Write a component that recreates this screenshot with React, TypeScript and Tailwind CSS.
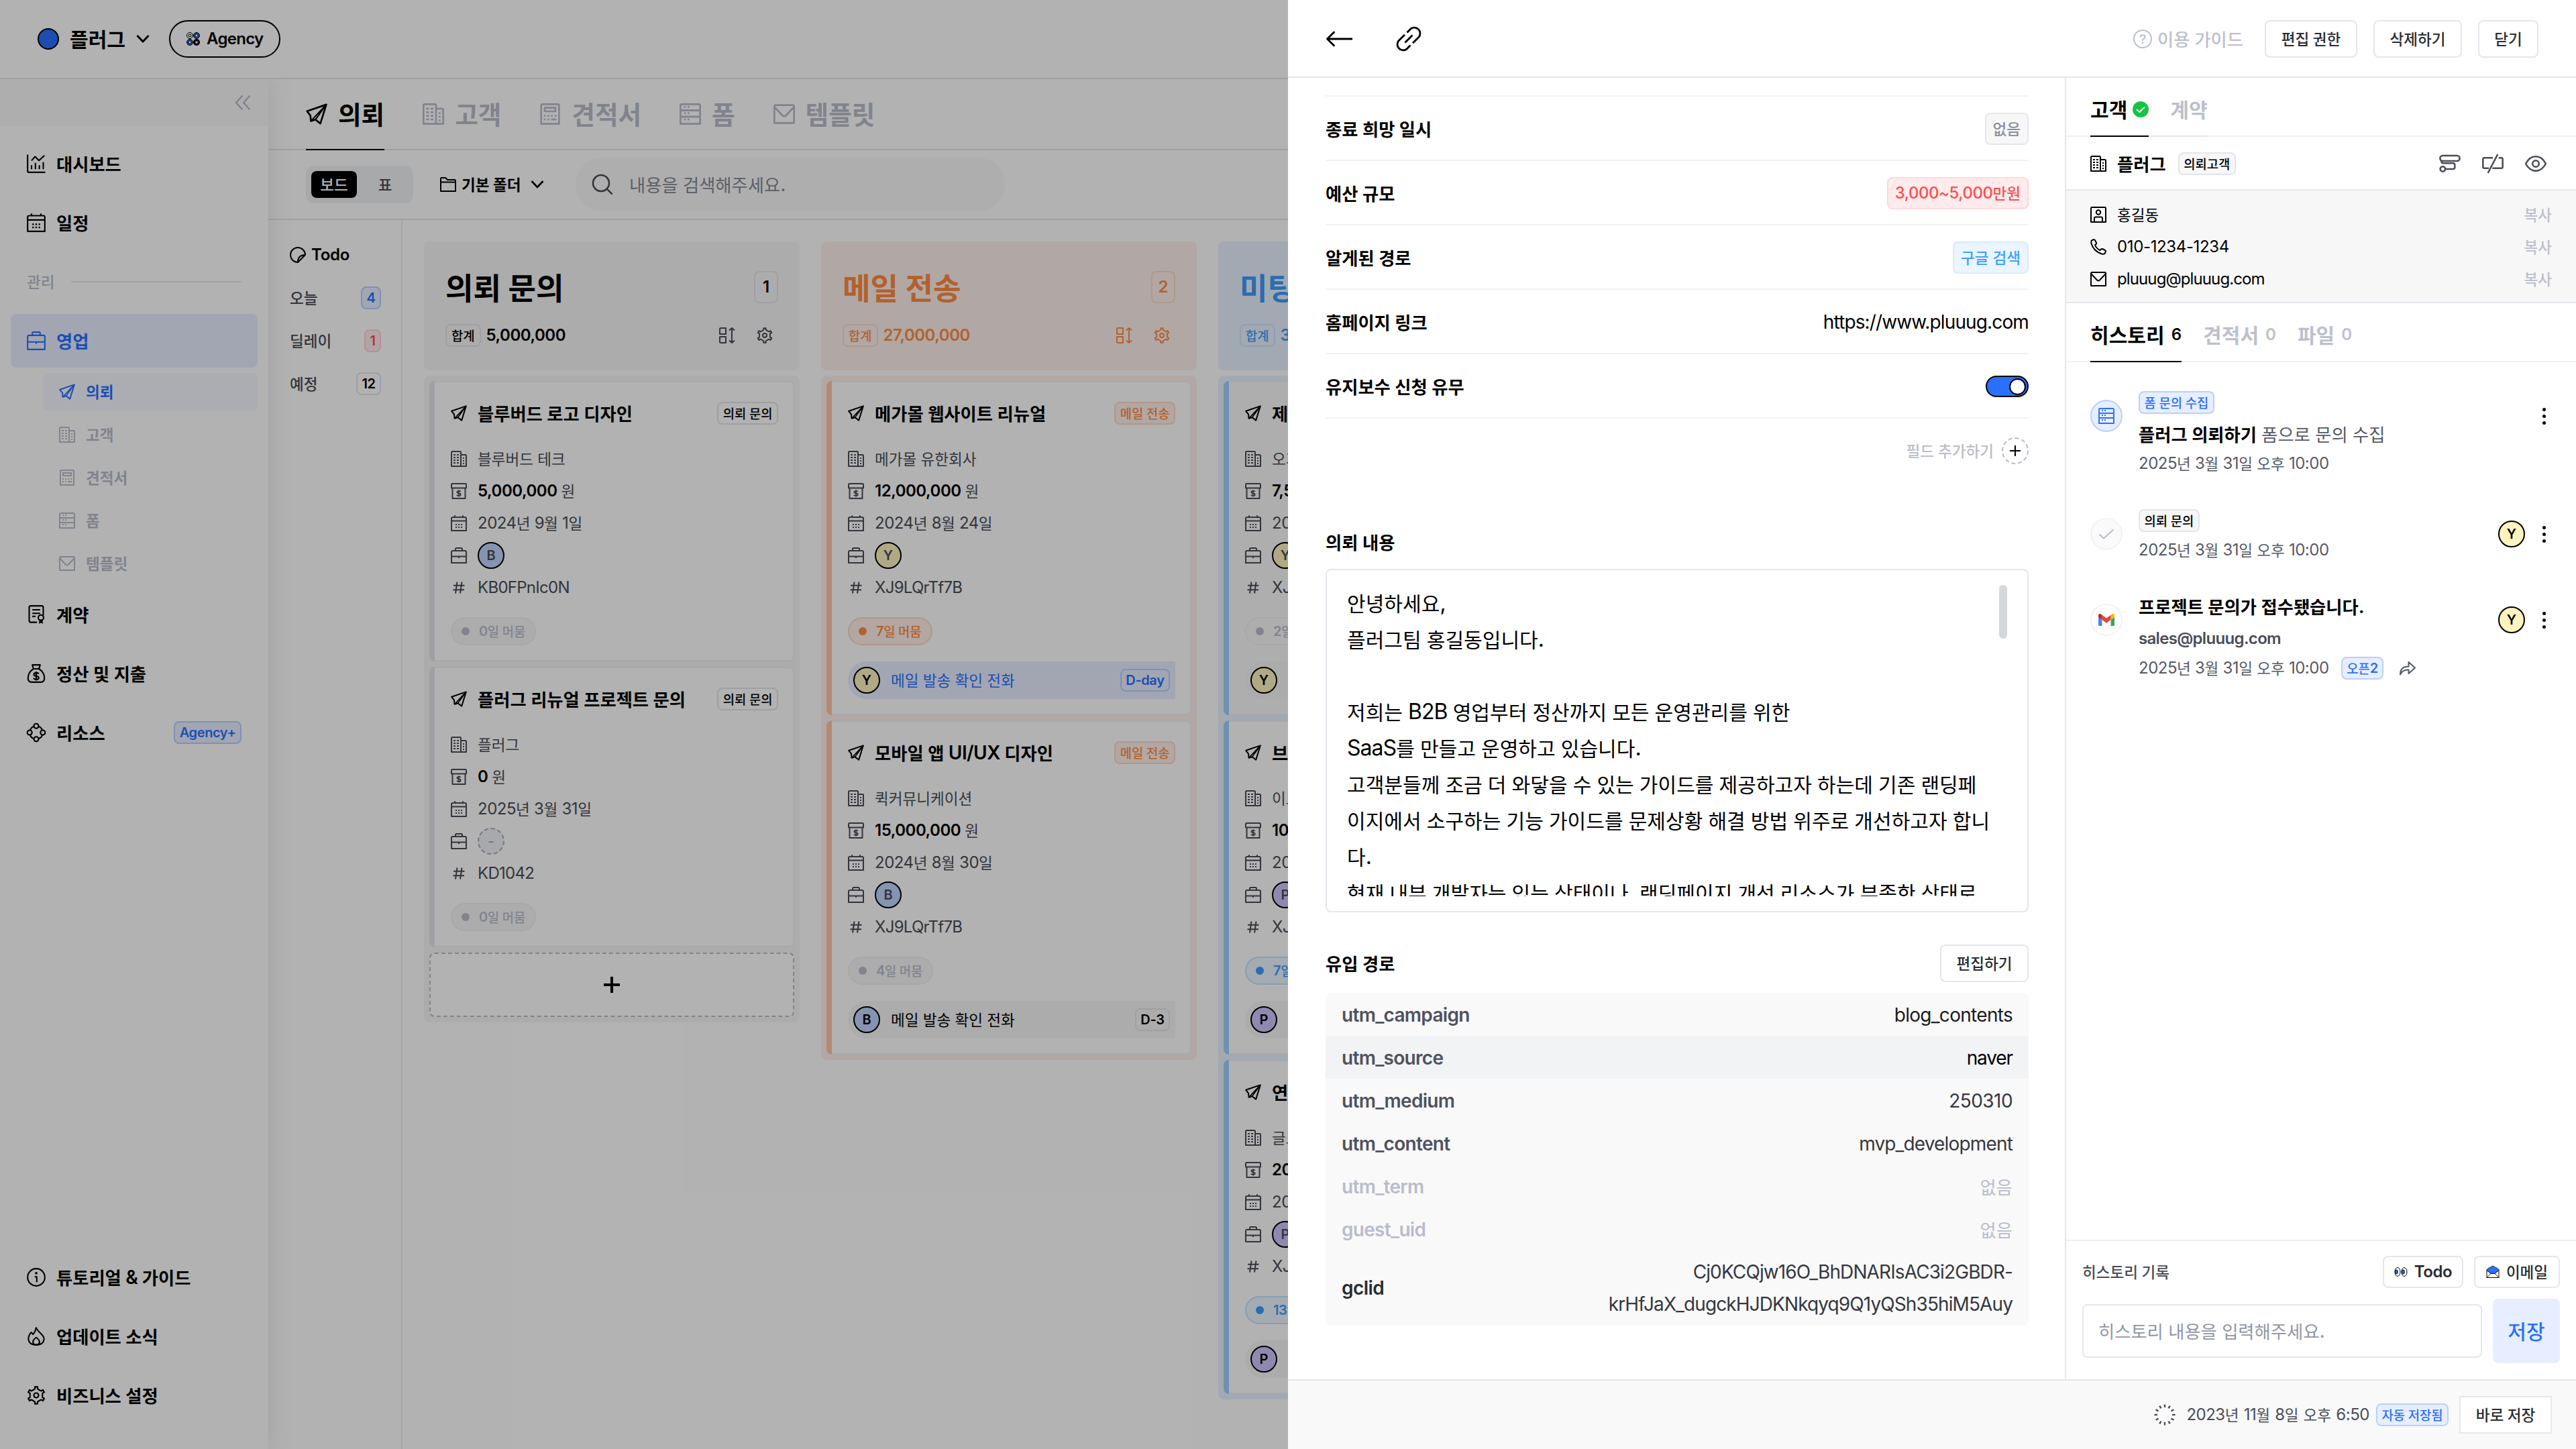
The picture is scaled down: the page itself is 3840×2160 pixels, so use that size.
import React from "react";

/* Hangul runs are set a little smaller than the Latin runs beside them. */
function T({ t, c = "", h = "" }: { t: string; c?: string; h?: string }) {
  return (
    <span className={`tracking-[-0.02em] whitespace-pre ${c}`}>
      {t.split(/([가-힣]+)/).map((p, i) =>
        i % 2 ? (
          <span key={i} className={`align-[-0.035em] text-[0.94em] leading-none tracking-normal ${h}`}>
            {p}
          </span>
        ) : (
          p
        )
      )}
    </span>
  );
}

function gearPath() {
  const pts: string[] = [];
  for (let i = 0; i < 6; i++) {
    const a = (i * Math.PI) / 3 - Math.PI / 2;
    [
      [-0.36, 8],
      [-0.19, 8.6],
      [-0.16, 11],
      [0.16, 11],
      [0.19, 8.6],
      [0.36, 8],
    ].forEach(([d, r]) => pts.push(`${(12 + r * Math.cos(a + d)).toFixed(2)} ${(12 + r * Math.sin(a + d)).toFixed(2)}`));
  }
  return "M" + pts.join("L") + "Z";
}
const GEAR = gearPath();

const dots = (xs: number[], ys: number[], w = 2) =>
  ys.flatMap((y) => xs.map((x) => <rect key={`${x}-${y}`} x={x} y={y} width={w} height={2} fill="currentColor" stroke="none" />));

const ICONS: Record<string, React.ReactNode> = {
  send: (
    <>
      <path d="M1.2 8.8 22.8 1.4 16.2 22.6 10.6 18.2 5.6 19.8 5 13.6Z" />
      <path d="M22.8 1.4 5.8 19.6M22.8 1.4 10.6 18.2" strokeWidth="1.6" />
    </>
  ),
  building: (
    <>
      <path d="M15 23V2.5Q15 1 13.5 1H2.5Q1 1 1 2.5V23H23V7.5Q23 6 21.5 6H15" />
      {dots([4, 9], [5, 9, 13, 17], 3)}
      {dots([18], [10, 14, 18])}
    </>
  ),
  calc: (
    <>
      <path d="M2 23V2.5Q2 1 3.5 1H20.5Q22 1 22 2.5V23Z" />
      <rect x="6" y="5" width="12" height="4" />
      {dots([5, 9, 13, 17], [13])}
      {dots([5, 9], [17])}
      {dots([13], [17], 6)}
    </>
  ),
  form: (
    <>
      <rect x="1" y="1" width="22" height="7" rx="1.5" />
      <rect x="1" y="8" width="22" height="7" rx="1.5" />
      <path d="M1 16.500Q1 15 2.5 15H21.500Q23 15 23 16.500V23H1Z" />
      {dots([5, 9], [3, 10, 17])}
    </>
  ),
  mail: (
    <>
      <path d="M1 22V3.500Q1 2 2.5 2H21.500Q23 2 23 3.500V22Z" />
      <path d="M1.500 4.500 10 13.500Q12 15.500 14 13.500L22.500 4.500" />
    </>
  ),
  chart: (
    <>
      <path d="M1 .5V21.500Q1 23 2.500 23H23.500M6 14V19M11 11V19M16 14V19M21 10V19M6 8 10.500 3 15.500 8 22.500 1.500" />
    </>
  ),
  calendar: (
    <>
      <path d="M1 23V5Q1 3 3 3H21Q23 3 23 5V23ZM1 8.500H23M6 .3V3M18 .3V3" />
      {dots([7, 11, 15], [13, 17])}
    </>
  ),
  briefcase: (
    <>
      <path d="M1 23V7Q1 5 3 5H21Q23 5 23 7V23ZM7 5V2.500Q7 1 8.500 1H15.500Q17 1 17 2.500V5M1 13.500H23M12 13.500V16" />
    </>
  ),
  contract: (
    <>
      <path d="M13 22H5Q3 22 3 20V3Q3 1 5 1H19Q21 1 21 3V13M7 6H17M7 10.500H17M7 14.500H11" />
      <circle cx="18" cy="16" r="3.4" />
      <path d="M15.700 18.500V24L18 22.500 20.300 24V18.500Z" fill="currentColor" stroke="none" />
    </>
  ),
  money: (
    <>
      <path d="M8.500 6C3 9.500 1.500 14 1.500 18Q1.500 23 6.500 23H17.500Q22.500 23 22.500 18C22.500 14 21 9.500 15.500 6ZM8.500 6 7 1H17L15.500 6" />
      <path d="M15.300 12.500Q14.500 11 12 11 9 11 9 13.200 9 15 12 15.200 15.200 15.500 15.200 17.500 15.200 19.600 12 19.600 9.300 19.600 8.700 17.800M12 9.500V21" />
    </>
  ),
  nodes: (
    <>
      <circle cx="12" cy="3.600" r="3" />
      <circle cx="12" cy="20.400" r="3" />
      <circle cx="3.600" cy="12" r="3" />
      <circle cx="20.400" cy="12" r="3" />
      <path d="M9 4.200Q5 5.500 4.300 9M15 4.200Q19 5.500 19.700 9M9 19.800Q5 18.500 4.300 15M15 19.800Q19 18.500 19.700 15" />
    </>
  ),
  info: (
    <>
      <circle cx="12" cy="12" r="11" />
      <path d="M10 11.300H12.700V18.500" />
      <circle cx="12" cy="6.700" r="1.600" fill="currentColor" stroke="none" />
    </>
  ),
  flame: (
    <>
      <path d="M12 1Q12.500 3.500 18 8.500 22 12 22 16 21 23 12 23 3 23 2 16 2 11 5.500 7L8 9.500Q11 6 12 1Z" />
      <path d="M12 13.500Q17 17 16 20.500 15 23 12 23 9 23 8 20.500 7 17 12 13.500Z" />
    </>
  ),
  gear: (
    <>
      <path d={GEAR} />
      <circle cx="12" cy="12" r="3" />
    </>
  ),
  price: (
    <>
      <path d="M1 7V2.500Q1 1 2.500 1H21.500Q23 1 23 2.500V7.500H1ZM2.500 7.500V23H21.500V7.500" />
      <path d="M14.800 12.800Q14 11.800 12 11.800 9.300 11.800 9.300 13.600 9.300 15.200 12 15.300 14.800 15.500 14.800 17.200 14.800 19 12 19 9.700 19 9 17.800M12 10.500V20.500" strokeWidth="1.700" />
    </>
  ),
  hash: <path d="M9.500 3.500 7 20.500M16.500 3.500 14 20.500M4 8.800H20.500M3.500 15.200H20" />,
  sort: (
    <>
      <path d="M1 10V2.500Q1 1 2.500 1H10V10ZM1 14H10V23H2.500Q1 23 1 21.500ZM19 1.500V22.500M15 4.500 19 1 23 4.500M15 19.500 19 23 23 19.500" />
    </>
  ),
  sticky: (
    <>
      <path d="M23 12A11 11 0 1 0 12 23L23 12Q12 12 12 23" />
    </>
  ),
  search: (
    <>
      <circle cx="10.500" cy="10.500" r="9" />
      <path d="M17 17 23 23" />
    </>
  ),
  folder: <path d="M1 22V3.500Q1 2 2.500 2H8L11 5H21.500Q23 5 23 6.500V22ZM1 8.500H23" />,
  chevrons: <path d="M11.500 1.500 2 12 11.500 22.500M22.500 1.500 13 12 22.500 22.500" />,
  chevron: <path d="M3.500 7 12 16 20.500 7" />,
  plus: <path d="M12 0V24M0 12H24" />,
  arrow: <path d="M1 12H24M8 5.500 1.500 12 8 18.500" />,
  person: (
    <>
      <path d="M1 23V2.500Q1 1 2.500 1H21.500Q23 1 23 2.500V23ZM6 23V17.500Q6 15.500 8 15.500H16Q18 15.500 18 17.500V23" />
      <circle cx="12" cy="8.500" r="3.200" />
    </>
  ),
  phone: (
    <path d="M2 2.500 5 1Q6.300 .8 7 2L9 6Q9.300 7.200 8.500 8L7 9.500Q9 14.500 14.500 17L16 15.500Q16.800 14.700 18 15L22 17Q23.200 17.700 23 19L21.500 22Q20.500 23.200 17 22.500 4 18 1.300 6 1 3.500 2 2.500Z" />
  ),
  link: <path d="M10.500 6.250 13.900 2.850A5.250 5.250 0 0 1 21.200 10.200L15.600 15.800M13.500 17.750 10.100 21.150A5.250 5.250 0 0 1 2.800 13.800L8.400 8.200M8.700 15.300 15.300 8.700" />,
  roller: (
    <>
      <rect x="1" y="3" width="22" height="6" rx="3" />
      <path d="M2.500 8.800Q2.500 11.500 4.500 11.500H15.500Q17.500 11.500 17.500 13.500V16Q17.500 18 15.500 18H7" />
      <circle cx="4" cy="18" r="2.800" />
    </>
  ),
  slash: <path d="M12 5.500H2.500Q1 5.500 1 7V15.500Q1 17 2.500 17H7.500M18.500 5.500H21.500Q23 5.500 23 7V15.500Q23 17 21.500 17H11.500M17.500 1.500 6.500 22.500" />,
  eye: (
    <>
      <path d="M.8 12Q5 4 12 4 19 4 23.200 12 19 20 12 20 5 20 .8 12Z" />
      <circle cx="12" cy="12" r="3.600" />
    </>
  ),
  share: <path d="M1 21.500Q1 9.500 13.500 9.500V3L23 11.500 13.500 20V14.500Q4.500 14 1 21.500Z" />,
  check: <path d="M1.500 12.500 8 18.500 22.500 5.500" />,
};

function Ic({ n, c = "size-6", sw = 2 }: { n: string; c?: string; sw?: number }) {
  return (
    <svg viewBox="0 0 24 24" className={`shrink-0 overflow-visible ${c}`} fill="none" stroke="currentColor" strokeWidth={sw} strokeLinejoin="round">
      {ICONS[n]}
    </svg>
  );
}

const BADGE = {
  gray: "border-[#e4e5eb] bg-[#f7f7f8] text-black",
  plain: "border-[#e4e5eb] bg-transparent text-black",
  blue: "border-[#b9d0ff] bg-[#e7eeff] text-[#2970ff]",
  red: "border-[#ffd3d5] bg-[#ffebec] text-[#ff4d4f]",
  orange: "border-[#ffd9c5] bg-[#fff0e9] text-[#ff8c42]",
} as const;

function Badge({ t, k = "gray" }: { t: string; k?: keyof typeof BADGE }) {
  return (
    <span className={`inline-flex h-[34px] shrink-0 items-center rounded-lg border-2 px-[6.500px] text-[20px] leading-[30px] font-semibold ${BADGE[k]}`}>
      <T t={t} h="font-medium" />
    </span>
  );
}

const AV: Record<string, string> = { B: "bg-[#c0d5ff]", Y: "bg-[#fdf3bf]", P: "bg-[#cdc4ff]" };

function Avatar({ l }: { l: string }) {
  if (l === "-")
    return (
      <span className="flex size-10 shrink-0 items-center justify-center rounded-full border-2 border-dashed border-[#a9adb9] bg-[#f1f3f6] text-[22px] text-[#a0a3b1]">-</span>
    );
  return <span className={`flex size-10 shrink-0 items-center justify-center rounded-full border-2 border-black text-[20px] font-semibold ${AV[l]}`}>{l}</span>;
}

/* ---------- sidebar ---------- */

function MenuItem({ icon, t, active, badge }: { icon: string; t: string; active?: boolean; badge?: string }) {
  return (
    <div className={`flex h-20 items-center gap-4 rounded-lg px-6 ${active ? "bg-[#e7eeff] text-[#2970ff]" : ""}`}>
      <Ic n={icon} c="size-7" sw={1.8} />
      <T t={t} c="flex-1 text-[28px] font-semibold" />
      {badge && <Badge t={badge} k="blue" />}
    </div>
  );
}

function SubItem({ icon, t, active }: { icon: string; t: string; active?: boolean }) {
  return (
    <div className={`ml-12 flex h-14 items-center gap-4 rounded-lg pl-6 ${active ? "bg-[#f5f8ff] text-[#2970ff]" : "text-[#b9bccb]"}`}>
      <Ic n={icon} />
      <T t={t} c="text-[24px] font-semibold" />
    </div>
  );
}

function Sidebar() {
  return (
    <aside className="relative z-10 flex w-[400px] shrink-0 flex-col bg-white shadow-[0_0_30px_6px_rgba(90,100,140,0.12)]">
      <div className="flex h-[70px] shrink-0 items-center justify-end bg-[#fafafa] pr-[26px] text-[#b9bccb]">
        <Ic n="chevrons" sw={2.600} />
      </div>
      <div className="flex flex-1 flex-col gap-2 px-4 pt-4">
        <MenuItem icon="chart" t="대시보드" />
        <MenuItem icon="calendar" t="일정" />
        <div className="flex h-20 items-center gap-6 px-6 text-[#b9bccb]">
          <T t="관리" c="text-[24px] font-medium" />
          <div className="h-0.5 flex-1 bg-[#e6e6ec]" />
        </div>
        <MenuItem icon="briefcase" t="영업" active />
        <SubItem icon="send" t="의뢰" active />
        <SubItem icon="building" t="고객" />
        <SubItem icon="calc" t="견적서" />
        <SubItem icon="form" t="폼" />
        <SubItem icon="mail" t="템플릿" />
        <MenuItem icon="contract" t="계약" />
        <MenuItem icon="money" t="정산 및 지출" />
        <MenuItem icon="nodes" t="리소스" badge="Agency+" />
      </div>
      <div className="flex flex-col gap-2 px-4 pb-10">
        <MenuItem icon="info" t="튜토리얼 & 가이드" />
        <MenuItem icon="flame" t="업데이트 소식" />
        <MenuItem icon="gear" t="비즈니스 설정" />
      </div>
    </aside>
  );
}

/* ---------- board ---------- */

const TONE = {
  gray: { bg: "bg-[#f7f7f7]", text: "text-black", icon: "text-[#4a4c56]", line: "border-[#e6e6ec]", bar: "bg-[#e3e5ec]" },
  orange: { bg: "bg-[#fef1ec]", text: "text-[#ff8c42]", icon: "text-[#ff8c42]", line: "border-[#fbdccb]", bar: "bg-[#ffc6a5]" },
  blue: { bg: "bg-[#e9f2ff]", text: "text-[#3b9dff]", icon: "text-[#3b9dff]", line: "border-[#cde6fd]", bar: "bg-[#9fd0ff]" },
} as const;
type Tone = keyof typeof TONE;

type CardData = {
  title: string;
  stage: string;
  company: string;
  price: string;
  date: string;
  who: string;
  code: string;
  stay: string;
  stayTone: "gray" | "orange" | "blue" | "clear";
  todo?: { who: string; t: string; d: string; hot?: boolean };
  muted?: boolean;
};

const STAY = {
  gray: "border-[#f1f1f3] bg-[#f7f7f8] text-[#b9bccb]",
  clear: "border-[#f1f1f3] bg-transparent text-[#b9bccb]",
  orange: "border-[#fbd9c6] bg-[#fff0e9] text-[#ff8c42]",
  blue: "border-[#c3e2fd] bg-[#ebf5ff] text-[#3b9dff]",
};

function Row({ icon, children }: { icon: string; children: React.ReactNode }) {
  return (
    <div className="flex h-12 items-center gap-4 text-[24px] text-[#4a4c56]">
      <Ic n={icon} />
      {children}
    </div>
  );
}

function Card({ d, tone }: { d: CardData; tone: Tone }) {
  return (
    <div className="flex w-[544px] overflow-hidden rounded-lg">
      <div className={`w-2 shrink-0 ${TONE[tone].bar}`} />
      <div className={`flex min-w-0 flex-1 flex-col rounded-r-lg border-2 border-l-0 border-[#f1f2f5] pr-[22px] pb-[22px] pl-6 ${d.muted ? "bg-[#fafafa]" : "bg-white"}`}>
        <div className="flex h-[90px] items-center gap-4 pt-0.5">
          <Ic n="send" />
          <T t={d.title} c="flex-1 text-[28px] font-semibold" />
          <Badge t={d.stage} k={tone === "gray" ? "plain" : tone} />
        </div>
        <Row icon="building">
          <T t={d.company} />
        </Row>
        <Row icon="price">
          <span className="flex items-center gap-1.5">
            <T t={d.price} c="font-semibold text-black" />
            <T t="원" />
          </span>
        </Row>
        <Row icon="calendar">
          <T t={d.date} />
        </Row>
        <Row icon="briefcase">
          <Avatar l={d.who} />
        </Row>
        <Row icon="hash">
          <span className="tracking-[-0.03em]">{d.code}</span>
        </Row>
        <div className={`mt-5 flex h-[42px] items-center gap-[14px] self-start rounded-full border-2 px-[14px] text-[20px] font-semibold ${STAY[d.stayTone]}`}>
          <span className="size-3 rounded-full bg-current" />
          <T t={d.stay} h="font-medium" />
        </div>
        {d.todo && (
          <div
            className={`mt-6 flex h-14 items-center gap-4 rounded-l-full rounded-r-lg px-2 text-[24px] ${
              d.todo.hot ? "bg-[#e7eeff] text-[#2970ff]" : "bg-[#f7f7f8] text-black"
            }`}
          >
            <span className="text-black">
              <Avatar l={d.todo.who} />
            </span>
            <T t={d.todo.t} c="flex-1" />
            <Badge t={d.todo.d} k={d.todo.hot ? "blue" : "plain"} />
          </div>
        )}
      </div>
    </div>
  );
}

function Column({ tone, title, count, sum, cards, add }: { tone: Tone; title: string; count: string; sum: string; cards: CardData[]; add?: boolean }) {
  const k = TONE[tone];
  return (
    <section className="flex w-[560px] shrink-0 flex-col gap-2">
      <div className={`h-48 rounded-lg px-8 pt-11 ${k.bg} ${k.text}`}>
        <div className="flex h-12 items-center justify-between">
          <T t={title} c="text-[48px] font-bold" />
          <span className={`flex h-12 min-w-9 items-center justify-center rounded-lg border-2 px-[8px] text-[24px] font-semibold ${k.line}`}>{count}</span>
        </div>
        <div className="mt-[27px] flex h-[42px] items-center">
          <span className={`flex h-[34px] items-center rounded-lg border-2 px-[7px] text-[20px] font-semibold ${k.line}`}>
            <T t="합계" h="font-medium" />
          </span>
          <T t={sum} c="ml-2 flex-1 text-[24px] font-semibold" />
          <span className={`flex gap-8 pr-2 ${k.icon}`}>
            <Ic n="sort" />
            <Ic n="gear" />
          </span>
        </div>
      </div>
      <div className={`flex flex-col gap-2 rounded-lg p-2 ${k.bg}`}>
        {cards.map((d, i) => (
          <Card key={i} d={d} tone={tone} />
        ))}
        {add && (
          <div className="flex h-24 items-center justify-center rounded-lg border-2 border-dashed border-[#b9bccb] bg-white">
            <Ic n="plus" sw={4} />
          </div>
        )}
      </div>
    </section>
  );
}

const CALL = "메일 발송 확인 전화";
const INQUIRY: CardData[] = [
  { title: "블루버드 로고 디자인", stage: "의뢰 문의", company: "블루버드 테크", price: "5,000,000", date: "2024년 9월 1일", who: "B", code: "KB0FPnIc0N", stay: "0일 머뭄", stayTone: "gray" },
  { title: "플러그 리뉴얼 프로젝트 문의", stage: "의뢰 문의", company: "플러그", price: "0", date: "2025년 3월 31일", who: "-", code: "KD1042", stay: "0일 머뭄", stayTone: "gray" },
];
const MAILED: CardData[] = [
  { title: "메가몰 웹사이트 리뉴얼", stage: "메일 전송", company: "메가몰 유한회사", price: "12,000,000", date: "2024년 8월 24일", who: "Y", code: "XJ9LQrTf7B", stay: "7일 머뭄", stayTone: "orange", todo: { who: "Y", t: CALL, d: "D-day", hot: true } },
  { title: "모바일 앱 UI/UX 디자인", stage: "메일 전송", company: "퀵커뮤니케이션", price: "15,000,000", date: "2024년 8월 30일", who: "B", code: "XJ9LQrTf7B", stay: "4일 머뭄", stayTone: "gray", todo: { who: "B", t: CALL, d: "D-3" } },
];
const MEETING: CardData[] = [
  { title: "제", stage: "미팅", company: "오가", price: "7,500,000", date: "2024년", who: "Y", code: "XJ9LQrTf7B", stay: "2일 머뭄", stayTone: "clear", muted: true, todo: { who: "Y", t: "", d: "D-3" } },
  { title: "브랜드", stage: "미팅", company: "이드", price: "10,000,000", date: "2024년", who: "P", code: "XJ9LQrTf7B", stay: "7일 머뭄", stayTone: "blue", todo: { who: "P", t: "", d: "D-3" } },
  { title: "연간", stage: "미팅", company: "글로벌", price: "20,000,000", date: "2024년", who: "P", code: "XJ9LQrTf7B", stay: "13일 머뭄", stayTone: "blue", todo: { who: "P", t: "", d: "D-3" } },
];

function MainTab({ icon, t, active }: { icon: string; t: string; active?: boolean }) {
  return (
    <div className={`-mb-0.5 flex h-[106px] items-center gap-4 border-b-2 ${active ? "border-black text-black" : "border-transparent text-[#b9bccb]"}`}>
      <Ic n={icon} c="size-8" />
      <T t={t} c="text-[40px] font-semibold" />
    </div>
  );
}

function TodoLine({ t, n, k }: { t: string; n: string; k: keyof typeof BADGE }) {
  return (
    <div className="flex h-16 items-center justify-between text-[#4a4c56]">
      <T t={t} c="text-[24px] font-medium" />
      <Badge t={n} k={k} />
    </div>
  );
}

function Board() {
  return (
    <div className="flex h-[2160px] w-[1920px] shrink-0 flex-col overflow-hidden bg-white">
      <header className="relative z-20 flex h-[118px] shrink-0 items-center border-b-2 border-[#e6e6ec] bg-white pl-14">
        <span className="size-8 rounded-full border-2 border-black bg-[#2970ff]" />
        <T t="플러그" c="ml-4 text-[32px] font-semibold" />
        <Ic n="chevron" c="ml-3.5 size-6" sw={3} />
        <div className="ml-[27px] flex h-14 w-[166px] items-center gap-2.5 rounded-full border-2 border-black pl-6">
          <svg viewBox="0 0 20 20" className="size-5">
            <g fill="none" strokeWidth="1">
              <circle cx="5" cy="5" r="4.500" fill="#fff" stroke="#000" />
              <circle cx="5" cy="5" r="2" stroke="#000" />
              <circle cx="15" cy="5" r="4.500" fill="#2970ff" stroke="#000" />
              <circle cx="15" cy="5" r="2.200" fill="#fff" stroke="#000" />
              <circle cx="5" cy="15" r="4.500" fill="#2970ff" stroke="#000" />
              <circle cx="5" cy="15" r="2.200" fill="#fff" stroke="#000" />
              <circle cx="15" cy="15" r="5" fill="#000" />
              <circle cx="15" cy="15" r="1.800" fill="#fff" />
            </g>
          </svg>
          <span className="text-[24px] font-semibold tracking-[-0.03em]">Agency</span>
        </div>
      </header>
      <div className="flex min-h-0 flex-1">
        <Sidebar />
        <main className="flex min-w-0 flex-1 flex-col">
          <nav className="flex h-[106px] shrink-0 gap-[57px] border-b-2 border-[#e6e6ec] pl-14">
            <MainTab icon="send" t="의뢰" active />
            <MainTab icon="building" t="고객" />
            <MainTab icon="calc" t="견적서" />
            <MainTab icon="form" t="폼" />
            <MainTab icon="mail" t="템플릿" />
          </nav>
          <div className="flex h-[104px] shrink-0 items-center border-b-2 border-[#e6e6ec] pl-14">
            <div className="flex h-14 w-40 items-center gap-2 rounded-xl bg-[#f0f2f5] p-2 text-[24px] font-semibold">
              <span className="flex h-10 w-[68px] items-center justify-center rounded-lg bg-black text-white">
                <T t="보드" h="font-medium" />
              </span>
              <span className="flex h-10 w-[68px] items-center justify-center text-[#4a4c56]">
                <T t="표" h="font-medium" />
              </span>
            </div>
            <div className="ml-10 flex w-[202px] items-center">
              <Ic n="folder" />
              <T t="기본 폴더" c="ml-2 text-[24px] font-semibold" />
              <Ic n="chevron" c="ml-3 size-6" sw={2.600} />
            </div>
            <div className="flex h-20 w-[640px] items-center gap-6 rounded-full bg-[#f9f9fa] pl-6 text-[#4a4c56]">
              <Ic n="search" c="size-8" sw={1.900} />
              <T t="내용을 검색해주세요." c="text-[28px] text-[#858896]" />
            </div>
          </div>
          <div className="flex min-h-0 flex-1">
            <div className="w-[200px] shrink-0 border-r-2 border-[#f0f0f3] pt-5 pr-[30px] pl-8">
              <div className="flex h-16 items-center gap-2">
                <Ic n="sticky" />
                <span className="text-[24px] font-semibold tracking-[-0.01em]">Todo</span>
              </div>
              <TodoLine t="오늘" n="4" k="blue" />
              <TodoLine t="딜레이" n="1" k="red" />
              <TodoLine t="예정" n="12" k="plain" />
            </div>
            <div className="flex min-w-0 flex-1 items-start gap-8 pt-8 pl-8">
              <Column tone="gray" title="의뢰 문의" count="1" sum="5,000,000" cards={INQUIRY} add />
              <Column tone="orange" title="메일 전송" count="2" sum="27,000,000" cards={MAILED} />
              <Column tone="blue" title="미팅" count="3" sum="37,500,000" cards={MEETING} />
            </div>
          </div>
        </main>
      </div>
    </div>
  );
}

/* ---------- drawer ---------- */

function Btn({ t, w, h = "h-14 rounded-lg", children }: { t: string; w: string; h?: string; children?: React.ReactNode }) {
  return (
    <button className={`flex shrink-0 items-center justify-center gap-2.5 border-2 border-[#e6e6ec] bg-white text-[24px] font-semibold text-[#2b2c31] ${w} ${h}`}>
      {children}
      <T t={t} h="font-medium" />
    </button>
  );
}

function Field({ t, children }: { t: string; children: React.ReactNode }) {
  return (
    <div className="flex h-24 shrink-0 items-center justify-between border-b-2 border-[#f2f2f4] pt-0.5 text-[28px]">
      <T t={t} c="font-semibold" />
      {children}
    </div>
  );
}

function Chip({ t, c }: { t: string; c: string }) {
  return (
    <span className={`flex h-12 items-center rounded-lg border-2 px-[10px] text-[24px] font-medium ${c}`}>
      <T t={t} />
    </span>
  );
}

const LINES = [
  "안녕하세요,",
  "플러그팀 홍길동입니다.",
  " ",
  "저희는 B2B 영업부터 정산까지 모든 운영관리를 위한",
  "SaaS를 만들고 운영하고 있습니다.",
  "고객분들께 조금 더 와닿을 수 있는 가이드를 제공하고자 하는데 기존 랜딩페",
  "이지에서 소구하는 기능 가이드를 문제상황 해결 방법 위주로 개선하고자 합니",
  "다.",
  "현재 내부 개발자는 있는 상태이나, 랜딩페이지 개선 리소스가 부족한 상태로",
];

const UTM: [string, string, string, string][] = [
  ["utm_campaign", "blog_contents", "", "text-[#1a1b1f] tracking-[-0.025em]"],
  ["utm_source", "naver", "bg-[#f1f3f5]", "text-black tracking-[-0.04em]"],
  ["utm_medium", "250310", "", "text-[#35373e] tracking-[-0.02em]"],
  ["utm_content", "mvp_development", "", "text-[#35373e] tracking-[-0.03em]"],
];

function Detail() {
  return (
    <div className="flex w-[1160px] shrink-0 flex-col overflow-hidden border-r-2 border-[#e6e6ec] pr-[54px] pl-14">
      <div className="h-7 shrink-0 border-b-2 border-[#f2f2f4]" />
      <Field t="종료 희망 일시">
        <Chip t="없음" c="border-[#e6e6ec] bg-[#f7f7f8] text-[#8c8f9c]" />
      </Field>
      <Field t="예산 규모">
        <Chip t="3,000~5,000만원" c="border-[#ffd9db] bg-[#ffebec] text-[#ff4d4f]" />
      </Field>
      <Field t="알게된 경로">
        <Chip t="구글 검색" c="border-[#d6ebff] bg-[#ebf5ff] text-[#3ea1ff]" />
      </Field>
      <Field t="홈페이지 링크">
        <span className="tracking-[-0.031em]">https://www.pluuug.com</span>
      </Field>
      <Field t="유지보수 신청 유무">
        <span className="flex h-8 w-16 items-center justify-end rounded-full border-2 border-black bg-[#2970ff] pr-0.5">
          <span className="size-[25px] rounded-full border-2 border-black bg-white" />
        </span>
      </Field>
      <div className="flex h-24 shrink-0 items-center justify-end gap-3">
        <T t="필드 추가하기" c="text-[24px] font-medium text-[#b9bccb]" />
        <span className="flex size-10 items-center justify-center rounded-full border-2 border-dashed border-[#b9bccb]">
          <Ic n="plus" c="size-4" sw={3.200} />
        </span>
      </div>
      <T t="의뢰 내용" c="mt-[68px] h-10 text-[28px] leading-[40px] font-semibold" />
      <div className="mt-5 flex h-[512px] shrink-0 justify-between rounded-lg border-2 border-[#e6e6ec] py-[22px] pr-[30px] pl-[30px]">
        <div className="h-[464px] overflow-hidden text-[32px] leading-[54px]">
          {LINES.map((l, i) => (
            <div key={i} className="h-[54px]">
              <T t={l} c="tracking-[-0.03em]" />
            </div>
          ))}
        </div>
        <div className="h-20 w-3 rounded-full bg-[#d4d8dd]" />
      </div>
      <div className="mt-12 flex h-14 shrink-0 items-center justify-between">
        <T t="유입 경로" c="text-[28px] font-semibold" />
        <Btn t="편집하기" w="w-[132px]" />
      </div>
      <div className="mt-4 shrink-0 overflow-hidden rounded-lg bg-[#f9f9fa] text-[28px]">
        {UTM.map(([k, v, bg, c]) => (
          <div key={k} className={`flex h-16 items-center justify-between px-6 pt-0.5 ${bg}`}>
            <span className="font-semibold tracking-[-0.025em] text-[#4f525e]">{k}</span>
            <span className={c}>{v}</span>
          </div>
        ))}
        {["utm_term", "guest_uid"].map((k) => (
          <div key={k} className="flex h-16 items-center justify-between px-6 pt-0.5 text-[#b9bccb]">
            <span className="font-semibold tracking-[-0.025em]">{k}</span>
            <T t="없음" />
          </div>
        ))}
        <div className="flex h-28 items-center justify-between px-6">
          <span className="font-semibold tracking-[-0.02em] text-[#2b2c31]">gclid</span>
          <span className="text-right leading-[48px] tracking-[-0.032em] text-[#35373e]">
            Cj0KCQjw16O_BhDNARIsAC3i2GBDR-
            <br />
            krHfJaX_dugckHJDKNkqyq9Q1yQSh35hiM5Auy
          </span>
        </div>
      </div>
    </div>
  );
}

function Contact({ icon, t, c = "" }: { icon: string; t: string; c?: string }) {
  return (
    <div className="flex h-12 items-center gap-4 text-[24px]">
      <Ic n={icon} />
      <span className={`flex-1 ${c}`}>{c ? t : <T t={t} />}</span>
      <T t="복사" c="font-medium text-[#bdc0cd]" />
    </div>
  );
}

function CountTab({ t, n, active }: { t: string; n: string; active?: boolean }) {
  return (
    <div className={`-mb-0.5 flex items-center gap-2.5 border-b-2 font-semibold ${active ? "border-black" : "border-transparent text-[#bdc0cd]"}`}>
      <T t={t} c="text-[32px]" />
      <span className="text-[24px]">{n}</span>
    </div>
  );
}

function Kebab() {
  return (
    <span className="ml-[26px] flex w-[5px] flex-col items-center gap-[5px]">
      <i className="size-[5px] rounded-full bg-black" />
      <i className="size-[5px] rounded-full bg-black" />
      <i className="size-[5px] rounded-full bg-black" />
    </span>
  );
}

function Entry({ mark, who, children, c }: { mark: React.ReactNode; who?: string; children: React.ReactNode; c: string }) {
  return (
    <div className={`flex ${c}`}>
      {mark}
      <div className="ml-6 flex flex-1 flex-col items-start">{children}</div>
      <div className="flex h-12 items-center pr-[9px] text-black">
        {who && <Avatar l={who} />}
        <Kebab />
      </div>
    </div>
  );
}

const WHEN = "2025년 3월 31일 오후 10:00";

function Customer() {
  return (
    <div className="flex min-w-0 flex-1 flex-col">
      <div className="flex h-[88px] shrink-0 gap-8 border-b-2 border-[#f2f2f4] px-9 pt-2 text-[32px] font-semibold">
        <div className="-mb-0.5 flex items-center gap-2 border-b-2 border-black">
          <T t="고객" />
          <svg viewBox="0 0 24 24" className="size-6">
            <circle cx="12" cy="12" r="12" fill="#16c443" />
            <path d="M6 12.200 10.500 16 18 8.500" fill="none" stroke="#fff" strokeWidth="2" />
          </svg>
        </div>
        <div className="-mb-0.5 -ml-8 flex items-center border-b-2 border-[#e6e6ec] pl-8 text-[#bdc0cd]">
          <T t="계약" />
        </div>
      </div>
      <div className="flex h-20 shrink-0 items-center border-b-2 border-[#e6e6ec] pt-0.5 pr-11 pl-9">
        <Ic n="building" />
        <T t="플러그" c="ml-4 mr-[18px] text-[28px] font-semibold" />
        <Badge t="의뢰고객" />
        <span className="ml-auto flex gap-8 text-[#4a4c56]">
          <Ic n="roller" c="size-8" sw={1.900} />
          <Ic n="slash" c="size-8" sw={1.900} />
          <Ic n="eye" c="size-8" sw={1.900} />
        </span>
      </div>
      <div className="h-[168px] shrink-0 border-b-2 border-[#e6e6ec] bg-[#f7f7f8] px-9 pt-3">
        <Contact icon="person" t="홍길동" />
        <Contact icon="phone" t="010-1234-1234" c="tracking-[-0.015em]" />
        <Contact icon="mail" t="pluuug@pluuug.com" c="tracking-[-0.037em]" />
      </div>
      <div className="flex h-[88px] shrink-0 gap-8 border-b-2 border-[#f2f2f4] px-9 pt-2">
        <CountTab t="히스토리" n="6" active />
        <CountTab t="견적서" n="0" />
        <CountTab t="파일" n="0" />
      </div>
      <div className="flex min-h-0 flex-1 flex-col px-9 pt-14 text-[24px] text-[#565966]">
        <Entry
          c="h-44"
          mark={
            <span className="flex size-12 items-center justify-center rounded-full border-2 border-[#b9d0ff] bg-[#e7eeff] text-[#2970ff]">
              <Ic n="form" />
            </span>
          }
        >
          <div className="-mt-[13px] flex flex-col items-start">
            <Badge t="폼 문의 수집" k="blue" />
            <div className="mt-[10px] h-10 text-[28px] leading-[40px]">
              <T t="플러그 의뢰하기" c="font-semibold text-black" />
              <T t=" 폼으로 문의 수집" />
            </div>
            <T t={WHEN} c="mt-[7px] leading-[34px]" />
          </div>
        </Entry>
        <Entry
          c="h-32"
          who="Y"
          mark={
            <span className="flex size-12 items-center justify-center rounded-full border-2 border-[#f2f2f4] bg-[#fafafa] text-[#b9bccb]">
              <Ic n="check" />
            </span>
          }
        >
          <div className="-mt-[13px] flex flex-col items-start">
            <Badge t="의뢰 문의" />
            <T t={WHEN} c="mt-[10px] leading-[34px]" />
          </div>
        </Entry>
        <Entry
          c=""
          who="Y"
          mark={
            <span className="flex size-12 items-center justify-center rounded-full border-2 border-[#f2f2f4] bg-white">
              <svg viewBox="52 42 88 66" className="w-6">
                <path fill="#4285f4" d="M58 108h14V74L52 59v43c0 3.320 2.690 6 6 6" />
                <path fill="#34a853" d="M120 108h14c3.320 0 6-2.690 6-6V59l-20 15" />
                <path fill="#fbbc04" d="M120 48v26l20-15v-8c0-7.420-8.470-11.650-14.400-7.200" />
                <path fill="#ea4335" d="M72 74V48l24 18 24-18v26L96 92" />
                <path fill="#c5221f" d="M52 51v8l20 15V48l-5.600-4.200c-5.940-4.450-14.400-.220-14.400 7.200" />
              </svg>
            </span>
          }
        >
          <div className="-mt-4 flex flex-col items-start">
            <T t="프로젝트 문의가 접수됐습니다." c="h-10 text-[28px] leading-[40px] font-semibold text-black" />
            <span className="mt-[11px] leading-[34px] font-semibold tracking-[-0.028em] text-[#4a4c56]">sales@pluuug.com</span>
            <div className="mt-[9px] flex h-[36px] items-center">
              <T t={WHEN} c="mr-[18px]" />
              <Badge t="오픈2" k="blue" />
              <Ic n="share" c="ml-6 size-6" />
            </div>
          </div>
        </Entry>
      </div>
      <div className="h-[208px] shrink-0 border-t-2 border-[#f0f0f3] px-6 pt-[22px]">
        <div className="flex h-12 items-center gap-4">
          <T t="히스토리 기록" c="flex-1 text-[24px] font-semibold text-[#4a4c56]" h="font-medium" />
          <Btn t="Todo" w="w-[120px]" h="h-12 rounded-lg">
            <svg viewBox="0 0 20 20" className="size-5">
              <g stroke="#000" strokeWidth="1">
                <ellipse cx="5" cy="10" rx="4" ry="6.500" fill="#fff" />
                <ellipse cx="15" cy="10" rx="4" ry="6.500" fill="#fff" />
                <ellipse cx="3.300" cy="10" rx="2" ry="3" fill="#2970ff" />
                <ellipse cx="13.300" cy="10" rx="2" ry="3" fill="#2970ff" />
              </g>
            </svg>
          </Btn>
          <Btn t="이메일" w="w-32" h="h-12 rounded-lg">
            <svg viewBox="0 0 20 20" className="size-5">
              <path d="M1 6.500 10 1 19 6.500V18.500H1Z" fill="#fff" stroke="#000" />
              <path d="M3.500 4Q10 1 16.500 4L18 8.500 12 12H8L2 8.500Z" fill="#2970ff" stroke="#1546b8" strokeWidth=".6" />
              <path d="M1 7.500 7 12.500 1 18.500M19 7.500 13 12.500 19 18.500M7 12.500H13" fill="none" stroke="#000" />
            </svg>
          </Btn>
        </div>
        <div className="mt-4 flex items-center gap-4">
          <div className="flex h-20 flex-1 items-center rounded-lg border-2 border-[#e6e6ec] pl-[22px] text-[28px] text-[#9195a4]">
            <T t="히스토리 내용을 입력해주세요." />
          </div>
          <div className="flex h-24 w-[100px] items-center justify-center rounded-lg bg-[#e7eeff] text-[32px] font-medium text-[#2970ff]">
            <T t="저장" />
          </div>
        </div>
      </div>
    </div>
  );
}

function Drawer() {
  return (
    <div className="relative z-40 flex h-[2160px] w-[1920px] shrink-0 flex-col bg-white">
      <header className="flex h-[116px] shrink-0 items-center border-b-2 border-[#e6e6ec] px-14 pt-0.5">
        <Ic n="arrow" c="size-10" sw={1.700} />
        <Ic n="link" c="ml-16 size-10" sw={1.700} />
        <div className="ml-auto mr-8 flex items-center gap-2 text-[#bdc0cd]">
          <svg viewBox="0 0 28 28" className="size-7" fill="none" stroke="currentColor" strokeWidth="2">
            <circle cx="14" cy="14" r="13" />
            <path d="M10.500 11.500Q10.500 8.200 14 8.200T17.500 11.200Q17.500 13 15.500 14T14 16.800" />
            <circle cx="14" cy="20" r="1.300" fill="currentColor" stroke="none" />
          </svg>
          <T t="이용 가이드" c="text-[28px] font-medium" />
        </div>
        <div className="flex gap-6">
          <Btn t="편집 권한" w="w-[138px]" />
          <Btn t="삭제하기" w="w-[132px]" />
          <Btn t="닫기" w="w-[90px]" />
        </div>
      </header>
      <div className="flex min-h-0 flex-1">
        <Detail />
        <Customer />
      </div>
      <footer className="flex h-[104px] shrink-0 items-center justify-end border-t-2 border-[#e6e6ec] bg-[#f9f9fa] pr-9">
        <svg viewBox="-16 -16 32 32" className="size-8 text-[#4a4c56]" stroke="currentColor" strokeWidth="2.400">
          {Array.from({ length: 12 }, (_, i) => (
            <path key={i} d="M0-15.500V-11" transform={`rotate(${i * 30})`} />
          ))}
        </svg>
        <T t="2023년 11월 8일 오후 6:50" c="mr-[10px] ml-4 text-[24px] text-[#4a4c56] [word-spacing:0.04em]" />
        <Badge t="자동 저장됨" k="blue" />
        <span className="w-4" />
        <Btn t="바로 저장" w="w-[138px]" h="h-14" />
      </footer>
    </div>
  );
}

export default function App() {
  return (
    <div className="relative flex h-[2160px] w-[3840px] overflow-hidden bg-white font-['Inter','Noto_Sans_CJK_KR',sans-serif] text-black">
      <Board />
      {/* modal backdrop */}
      <div className="absolute inset-y-0 left-0 z-30 w-[1920px] bg-black/30" />
      <Drawer />
    </div>
  );
}
